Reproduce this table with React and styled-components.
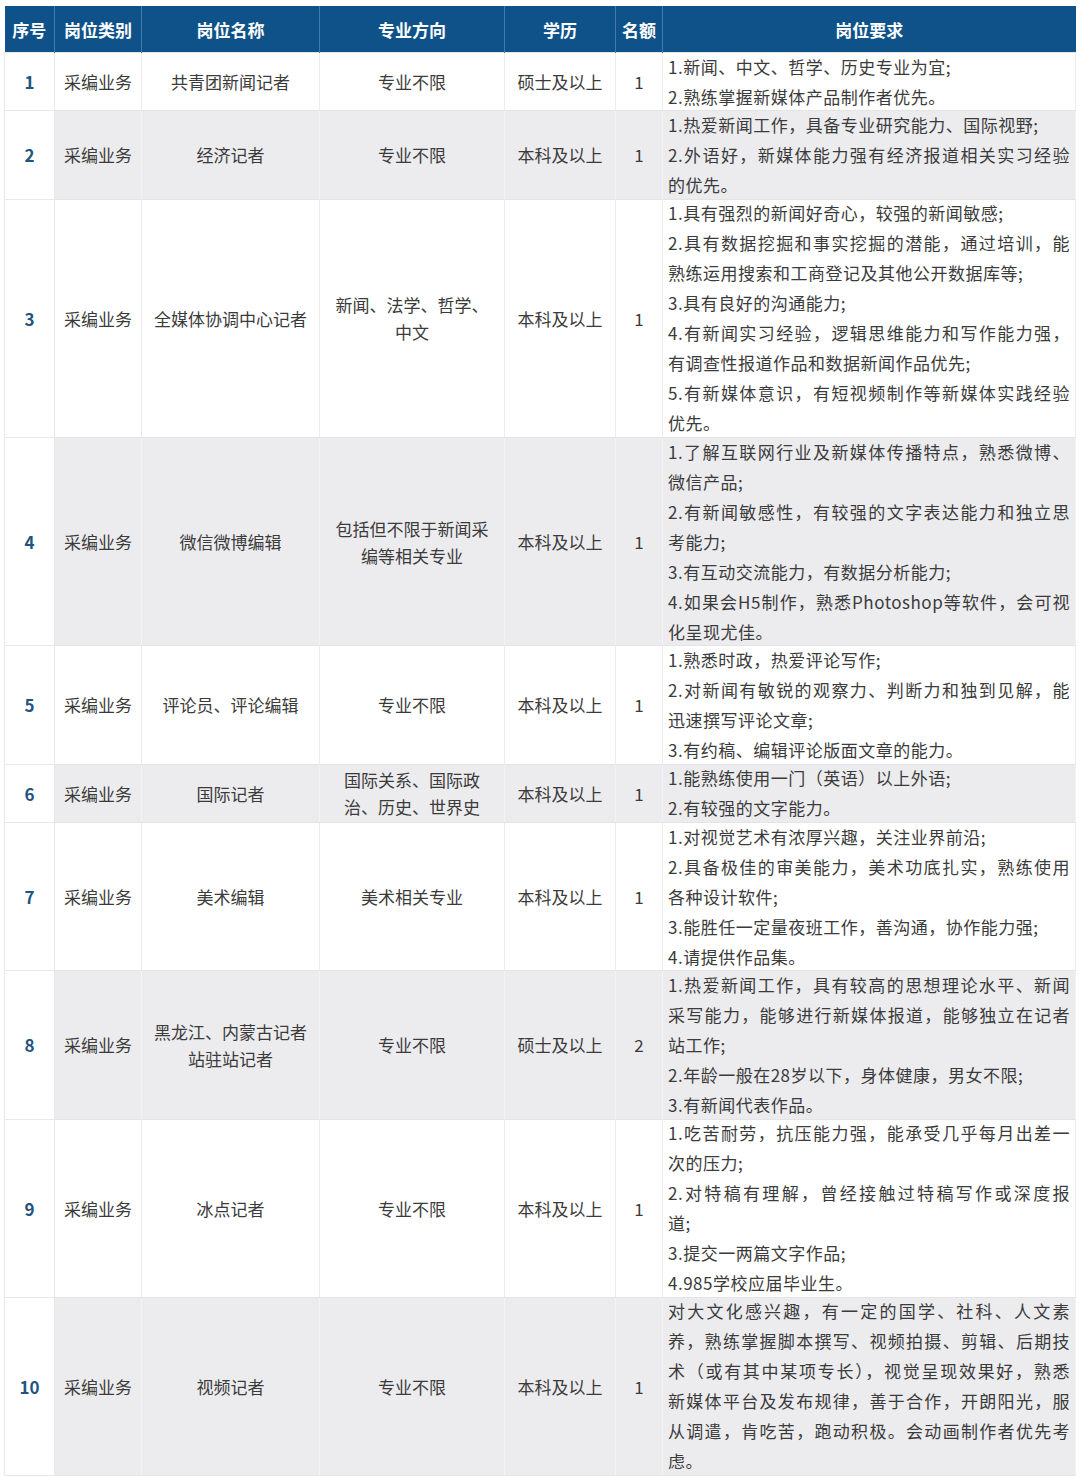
import React from 'react';
import styled, { createGlobalStyle } from 'styled-components';

const GlobalStyle = createGlobalStyle`
    body {
        margin: 0;
        background: #ffffff;
        font-family: "Noto Sans CJK SC", "Noto Sans", sans-serif;
    }
`

const Page = styled.div`
    padding: 6px 5px 0 4px;
`

const Table = styled.table`
    width: 1071px;
    border-collapse: collapse;
    table-layout: fixed;
    font-size: 17px;
    color: #3b3b3b;
`

const HeadCell = styled.th`
    height: 46px;
    padding: 0;
    background: #0f5289;
    color: #ffffff;
    font-weight: 700;
    font-size: 17px;
    text-align: center;
    border-right: 1px solid #3f7cae;
    &:last-child {
        border-right: none;
    }
`

const Cell = styled.td`
    padding: 0 4px;
    text-align: center;
    vertical-align: middle;
    line-height: 27px;
    background: ${p => (p.$shade ? '#ececef' : '#ffffff')};
    border: 1px solid ${p => (p.$shade ? '#f3f3f5' : '#ececee')};
    border-top-color: #e4e4e7;
    border-bottom-color: #e4e4e7;
`

const NumCell = styled(Cell)`
    background: #ffffff;
    border-color: #e8e8ea;
    color: #1f5480;
    font-weight: 700;
`

const ReqCell = styled(Cell)`
    padding: 0 5px;
    text-align: left;
    line-height: 30px;
    letter-spacing: 0.5px;
`

// lines sit a little tighter against the row borders than a plain block would
const ReqBody = styled.div`
    margin: -1.35px 0;
`

const Line = styled.span`
    display: block;
    white-space: ${p => (p.$j ? 'normal' : 'nowrap')};
    text-align: ${p => (p.$j ? 'justify' : 'inherit')};
    text-align-last: ${p => (p.$j ? 'justify' : 'auto')};
`

const COLS = [50, 87, 178, 185, 111, 47, 413]
const HEAD = ['序号', '岗位类别', '岗位名称', '专业方向', '学历', '名额', '岗位要求']

// lines of 岗位要求; '>' prefix = stretched full width
const ROWS = [
    { name: ['共青团新闻记者'], major: ['专业不限'], edu: '硕士及以上', n: 1, req: [
        '1.新闻、中文、哲学、历史专业为宜;',
        '2.熟练掌握新媒体产品制作者优先。'] },
    { name: ['经济记者'], major: ['专业不限'], edu: '本科及以上', n: 1, req: [
        '1.热爱新闻工作，具备专业研究能力、国际视野;',
        '>2.外语好，新媒体能力强有经济报道相关实习经验',
        '的优先。'] },
    { name: ['全媒体协调中心记者'], major: ['新闻、法学、哲学、', '中文'], edu: '本科及以上', n: 1, req: [
        '1.具有强烈的新闻好奇心，较强的新闻敏感;',
        '>2.具有数据挖掘和事实挖掘的潜能，通过培训，能',
        '熟练运用搜索和工商登记及其他公开数据库等;',
        '3.具有良好的沟通能力;',
        '>4.有新闻实习经验，逻辑思维能力和写作能力强，',
        '有调查性报道作品和数据新闻作品优先;',
        '>5.有新媒体意识，有短视频制作等新媒体实践经验',
        '优先。'] },
    { name: ['微信微博编辑'], major: ['包括但不限于新闻采', '编等相关专业'], edu: '本科及以上', n: 1, req: [
        '>1.了解互联网行业及新媒体传播特点，熟悉微博、',
        '微信产品;',
        '>2.有新闻敏感性，有较强的文字表达能力和独立思',
        '考能力;',
        '3.有互动交流能力，有数据分析能力;',
        '>4.如果会H5制作，熟悉Photoshop等软件，会可视',
        '化呈现尤佳。'] },
    { name: ['评论员、评论编辑'], major: ['专业不限'], edu: '本科及以上', n: 1, req: [
        '1.熟悉时政，热爱评论写作;',
        '>2.对新闻有敏锐的观察力、判断力和独到见解，能',
        '迅速撰写评论文章;',
        '3.有约稿、编辑评论版面文章的能力。'] },
    { name: ['国际记者'], major: ['国际关系、国际政', '治、历史、世界史'], edu: '本科及以上', n: 1, req: [
        '1.能熟练使用一门（英语）以上外语;',
        '2.有较强的文字能力。'] },
    { name: ['美术编辑'], major: ['美术相关专业'], edu: '本科及以上', n: 1, req: [
        '1.对视觉艺术有浓厚兴趣，关注业界前沿;',
        '>2.具备极佳的审美能力，美术功底扎实，熟练使用',
        '各种设计软件;',
        '3.能胜任一定量夜班工作，善沟通，协作能力强;',
        '4.请提供作品集。'] },
    { name: ['黑龙江、内蒙古记者', '站驻站记者'], major: ['专业不限'], edu: '硕士及以上', n: 2, req: [
        '>1.热爱新闻工作，具有较高的思想理论水平、新闻',
        '>采写能力，能够进行新媒体报道，能够独立在记者',
        '站工作;',
        '2.年龄一般在28岁以下，身体健康，男女不限;',
        '3.有新闻代表作品。'] },
    { name: ['冰点记者'], major: ['专业不限'], edu: '本科及以上', n: 1, req: [
        '>1.吃苦耐劳，抗压能力强，能承受几乎每月出差一',
        '次的压力;',
        '>2.对特稿有理解，曾经接触过特稿写作或深度报',
        '道;',
        '3.提交一两篇文字作品;',
        '4.985学校应届毕业生。'] },
    { name: ['视频记者'], major: ['专业不限'], edu: '本科及以上', n: 1, req: [
        '>对大文化感兴趣，有一定的国学、社科、人文素',
        '>养，熟练掌握脚本撰写、视频拍摄、剪辑、后期技',
        '>术（或有其中某项专长），视觉呈现效果好，熟悉',
        '>新媒体平台及发布规律，善于合作，开朗阳光，服',
        '>从调遣，肯吃苦，跑动积极。会动画制作者优先考',
        '虑。'] },
]

function Lines({ items }) {
    return items.map((t, i) => <Line key={i}>{t}</Line>)
}

export default function App() {
    return (
        <Page>
            <GlobalStyle />
            <Table>
                <colgroup>
                    {COLS.map((w, i) => <col key={i} style={{ width: w }} />)}
                </colgroup>
                <thead>
                    <tr>
                        {HEAD.map(h => <HeadCell key={h}>{h}</HeadCell>)}
                    </tr>
                </thead>
                <tbody>
                    {ROWS.map((row, i) => {
                        const shade = i % 2 === 1
                        return (
                            <tr key={i}>
                                <NumCell>{i + 1}</NumCell>
                                <Cell $shade={shade}>采编业务</Cell>
                                <Cell $shade={shade}><Lines items={row.name} /></Cell>
                                <Cell $shade={shade}><Lines items={row.major} /></Cell>
                                <Cell $shade={shade}>{row.edu}</Cell>
                                <Cell $shade={shade}>{row.n}</Cell>
                                <ReqCell $shade={shade}>
                                    <ReqBody>
                                        {row.req.map((t, k) => {
                                            const j = t.startsWith('>')
                                            return <Line key={k} $j={j}>{j ? t.slice(1) : t}</Line>
                                        })}
                                    </ReqBody>
                                </ReqCell>
                            </tr>
                        )
                    })}
                </tbody>
            </Table>
        </Page>
    );
}
